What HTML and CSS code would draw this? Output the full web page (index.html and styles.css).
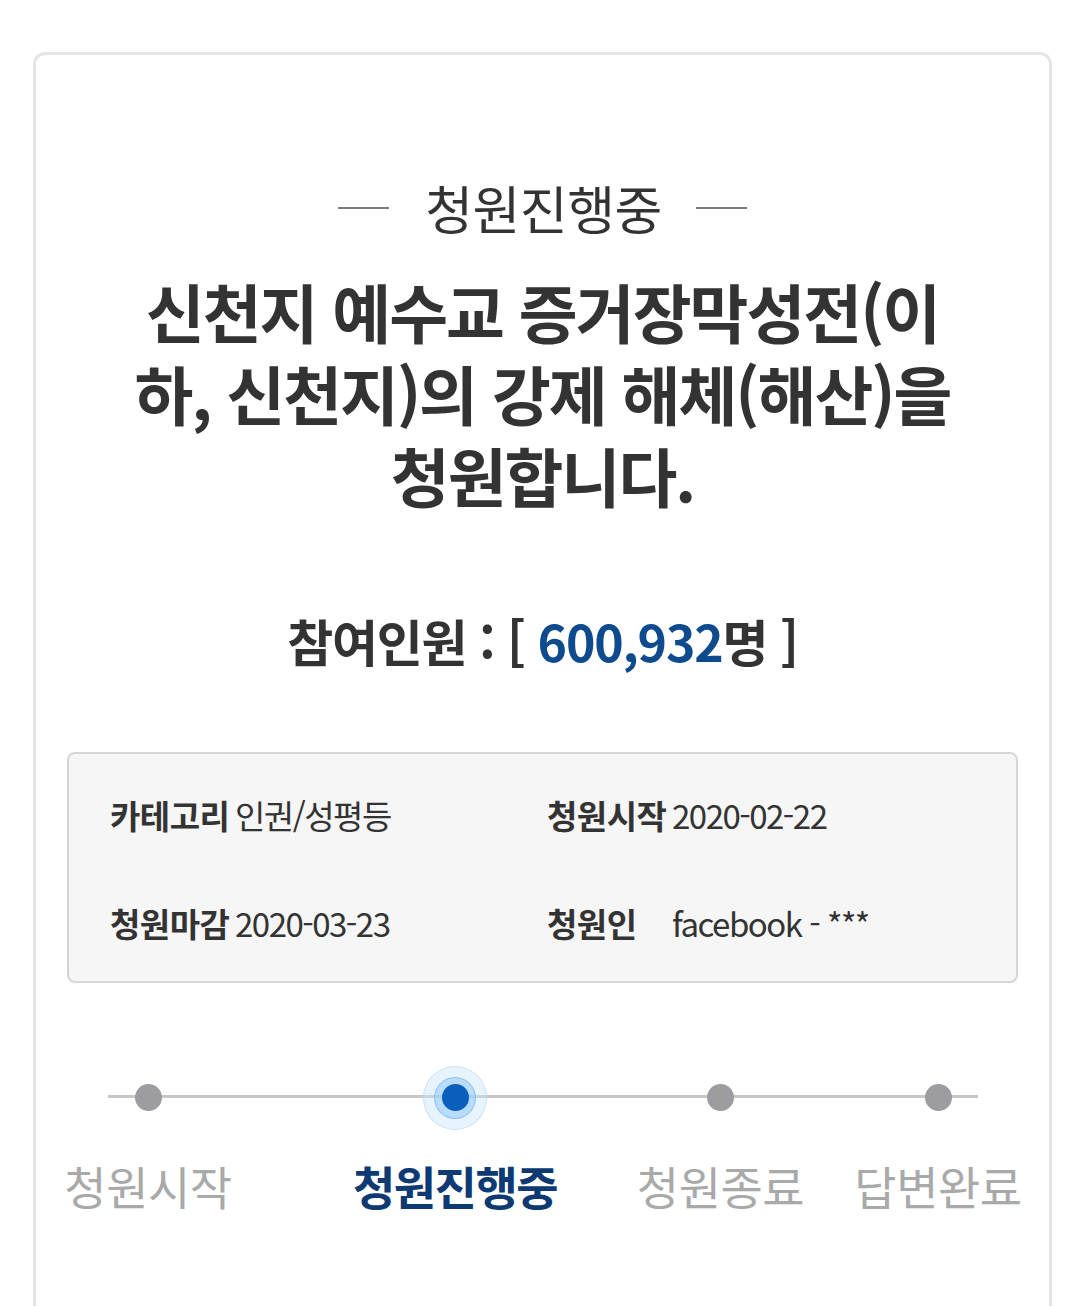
FILE: index.html
```html
<!DOCTYPE html>
<html lang="ko">
<head>
<meta charset="utf-8">
<title>청원진행중</title>
<link rel="stylesheet" href="styles.css">
</head>
<body>
<div class="card">
  <div class="status">
    <span class="dash"></span>
    <span class="status-text">청원진행중</span>
    <span class="dash"></span>
  </div>
  <h1 class="title">신천지 예수교 증거장막성전(이<br>하, 신천지)의 강제 해체(해산)을<br>청원합니다.</h1>
  <p class="count">참여인원 : [ <span class="num">600,932</span>명 ]</p>
  <div class="info">
    <div class="info-item"><span class="label">카테고리</span><span class="value">인권/성평등</span></div>
    <div class="info-item"><span class="label">청원시작</span><span class="value">2020-02-22</span></div>
    <div class="info-item"><span class="label">청원마감</span><span class="value">2020-03-23</span></div>
    <div class="info-item"><span class="label">청원인</span><span class="value">facebook - ***</span></div>
  </div>
  <div class="steps">
    <div class="step s1"><span class="dot"></span><span class="step-label">청원시작</span></div>
    <div class="step s2 active"><span class="dot"></span><span class="step-label">청원진행중</span></div>
    <div class="step s3"><span class="dot"></span><span class="step-label">청원종료</span></div>
    <div class="step s4"><span class="dot"></span><span class="step-label">답변완료</span></div>
  </div>
</div>
</body>
</html>
```
FILE: styles.css
```css
html, body {
  margin: 0;
  padding: 0;
  background: #ffffff;
}
body {
  font-family: "Noto Sans CJK KR", "Noto Sans", sans-serif;
  color: #333333;
  height: 1306px;
  overflow: hidden;
}
.card {
  margin: 52px 0 0 33px;
  width: 1019px;
  box-sizing: border-box;
  min-height: 1400px;
  border: 3px solid #e6e4e7;
  border-bottom: none;
  border-radius: 12px 12px 0 0;
  padding: 123px 31px 0;
}
.status {
  display: flex;
  justify-content: center;
  align-items: center;
  height: 60px;
}
.dash {
  display: block;
  width: 51px;
  height: 2px;
  background: #7a7a7a;
}
.status-text {
  font-size: 52px;
  line-height: 60px;
  letter-spacing: -0.5px;
  margin: 0 34px 0 36px;
  color: #333333;
  font-weight: 400;
}
.title {
  margin: 31px 0 0;
  text-align: center;
  font-size: 64px;
  line-height: 82px;
  font-weight: 700;
  letter-spacing: -2px;
  color: #333333;
}
.count {
  margin: 95px 0 0;
  text-align: center;
  font-size: 50px;
  line-height: 60px;
  font-weight: 700;
  letter-spacing: -1.2px;
  color: #333333;
}
.num {
  color: #0d4a8e;
}
.info {
  margin-top: 82px;
  background: #f6f6f6;
  border: 2px solid #d6d6d6;
  border-radius: 8px;
  display: grid;
  grid-template-columns: 437px 1fr;
  row-gap: 64px;
  padding: 39px 20px 36px 41px;
}
.info-item {
  font-size: 33px;
  line-height: 44px;
  white-space: nowrap;
}
.label {
  display: inline-block;
  min-width: 125px;
  font-weight: 700;
  letter-spacing: -0.5px;
  color: #333333;
}
.value {
  font-weight: 400;
  letter-spacing: -1.5px;
  color: #333333;
}
.steps {
  position: relative;
  margin-top: 79px;
  display: grid;
  grid-template-columns: 162px 125px 202px 83px 163px 55px 162px;
}
.steps::before {
  content: "";
  position: absolute;
  left: 41px;
  right: 40px;
  top: 33px;
  height: 3px;
  background: #c7c7c7;
}
.step {
  position: relative;
  z-index: 0;
  display: flex;
  flex-direction: column;
  align-items: center;
}
.s1 { grid-column: 1; }
.s2 { grid-column: 3; }
.s3 { grid-column: 5; }
.s4 { grid-column: 7; }
.dot {
  position: relative;
  display: block;
  width: 27px;
  height: 27px;
  margin: 22px 0 21px;
  border-radius: 50%;
  background: #9d9ca0;
}
.active .dot {
  background: #0a5fbd;
}
.active .dot::before,
.active .dot::after {
  content: "";
  position: absolute;
  border-radius: 50%;
  left: 50%;
  top: 50%;
  transform: translate(-50%, -50%);
  z-index: -1;
  box-sizing: border-box;
}
.active .dot::before {
  width: 64px;
  height: 64px;
  background: rgba(205, 230, 250, 0.45);
  border: 1px solid rgba(170, 210, 240, 0.5);
}
.active .dot::after {
  width: 42px;
  height: 42px;
  background: rgba(150, 205, 248, 0.6);
  border: 1px solid rgba(90, 160, 225, 0.45);
}
.step-label {
  margin-top: 25px;
  font-size: 46px;
  line-height: 56px;
  letter-spacing: -0.5px;
  color: #a9a9a9;
  font-weight: 400;
  white-space: nowrap;
}
.active .step-label {
  color: #0e3a74;
  font-weight: 700;
  letter-spacing: -1.5px;
}
```
